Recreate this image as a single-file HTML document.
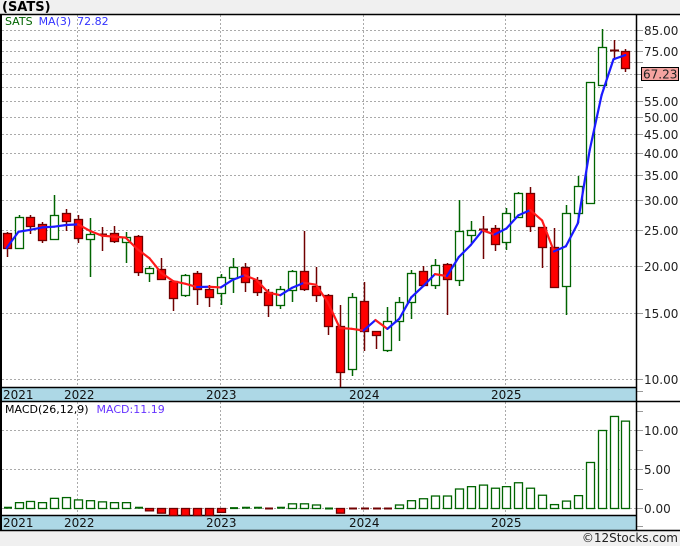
<!DOCTYPE html>
<html><head><meta charset="utf-8"><style>
html,body{margin:0;padding:0;background:#f0f0f0;}
svg{display:block;font-family:"DejaVu Sans","Liberation Sans",sans-serif;}
</style></head><body>
<svg id="s" width="680" height="546" xmlns="http://www.w3.org/2000/svg">
<rect x="0" y="0" width="680" height="546" fill="#f0f0f0"/>
<rect x="0" y="14" width="680" height="517" fill="#fff"/>
<text x="2" y="11" font-size="13" font-weight="bold" fill="#000">(SATS)</text>
<g id="grid"></g>
<rect x="0" y="387" width="637" height="14" fill="#add8e6"/>
<rect x="0" y="515" width="637" height="15" fill="#add8e6"/>
<g stroke="#000" stroke-width="1.5">
<line x1="0" y1="14.5" x2="680" y2="14.5"/>
<line x1="0" y1="387.5" x2="637" y2="387.5"/>
<line x1="0" y1="401.5" x2="680" y2="401.5"/>
<line x1="0" y1="515.5" x2="637" y2="515.5"/>
<line x1="0" y1="530.5" x2="680" y2="530.5"/>
<line x1="636.5" y1="14" x2="636.5" y2="531"/>
</g>
<rect x="0" y="14" width="2" height="517" fill="#000"/>
<g font-size="12" fill="#111">
<text x="3" y="399">2021</text><text x="64" y="399">2022</text><text x="206" y="399">2023</text><text x="349" y="399">2024</text><text x="491" y="399">2025</text>
<text x="3" y="527">2021</text><text x="64" y="527">2022</text><text x="206" y="527">2023</text><text x="349" y="527">2024</text><text x="491" y="527">2025</text>
</g>
<g id="c"></g>
<text x="5" y="25" font-size="11"><tspan fill="#006400">SATS</tspan><tspan fill="#3333ff" dx="6">MA(3)</tspan><tspan fill="#3333ff" dx="6">72.82</tspan></text>
<text x="5" y="413" font-size="11"><tspan fill="#000">MACD(26,12,9)</tspan><tspan fill="#6633ff" dx="8">MACD:11.19</tspan></text>
<rect x="641.5" y="67.5" width="37" height="13" fill="#f4a3a0" stroke="#000"/>
<text x="643" y="78.5" font-size="12" fill="#222">67.23</text>
<text x="678" y="542" font-size="12" fill="#222" text-anchor="end">©12Stocks.com</text>
</svg>
<script>
var NS="http://www.w3.org/2000/svg",g=document.getElementById('grid'),c=document.getElementById('c');
function el(p,t,a){var e=document.createElementNS(NS,t);for(var k in a)e.setAttribute(k,a[k]);p.appendChild(e);return e;}
function py(p){return 379-163*Math.log(p/10);}
var labeled={85:1,75:1,55:1,50:1,45:1,40:1,35:1,30:1,25:1,20:1,15:1,10:1};
for(var p=10;p<=85;p+=5){var y=Math.round(py(p))+.5;
el(g,'line',{x1:2,y1:y,x2:636,y2:y,stroke:'#aaa','stroke-dasharray':'2,2'});
el(g,'line',{x1:637,y1:y,x2:643,y2:y,stroke:'#999'});
if(labeled[p]){var t=el(g,'text',{x:644,y:y+4.5,'font-size':12,fill:'#222'});t.textContent=p.toFixed(2);}}
[[10,430],[5,469],[0,508]].forEach(function(a){var y=a[1]+.5;
el(g,'line',{x1:2,y1:y,x2:636,y2:y,stroke:'#aaa','stroke-dasharray':'2,2'});
el(g,'line',{x1:637,y1:y,x2:643,y2:y,stroke:'#999'});
var t=el(g,'text',{x:644,y:y+4.5,'font-size':12,fill:'#222'});t.textContent=a[0].toFixed(2);});
[391,411,450,489,526].forEach(function(y){el(g,'line',{x1:637,y1:y+.5,x2:643,y2:y+.5,stroke:'#999'});});
[77,220,363,505].forEach(function(x){
el(g,'line',{x1:x+.5,y1:15,x2:x+.5,y2:387,stroke:'#aaa','stroke-dasharray':'2,2'});
el(g,'line',{x1:x+.5,y1:402,x2:x+.5,y2:515,stroke:'#aaa','stroke-dasharray':'2,2'});
el(g,'line',{x1:x+.5,y1:515,x2:x+.5,y2:520,stroke:'#888'});});
// [up, bodyTop, bodyBot, wickTop, wickBot]
var D=[[0,233,248,232,257],[1,217,248,215,248],[0,217,226,215,234],[0,224,240,222,243],[1,215,239,195,239],
[0,213,221,209,231],[0,219,238,215,243],[1,234,239,218,277],[2,234,235,227,251],[0,233,241,226,243],
[1,237,242,232,263],[0,236,272,235,276],[1,268,273,266,282],[0,269,279,258,279],[0,281,298,281,311],
[1,275,295,274,297],[0,273,289,271,305],[0,289,297,285,307],[1,277,293,274,305],[1,267,278,258,293],
[0,267,282,263,292],[0,280,292,277,296],[0,292,305,289,317],[1,289,305,286,309],[1,271,290,270,302],
[0,271,289,231,291],[0,286,295,267,302],[0,295,326,294,335],[0,326,372,305,387],[1,297,369,293,376],
[0,301,331,282,351],[0,331,335,331,349],[1,321,350,307,352],[1,302,321,297,341],[1,273,302,270,319],
[0,271,285,266,287],[1,265,285,259,289],[0,264,279,263,315],[1,231,280,200,286],[1,230,235,221,243],
[2,229,230,216,259],[0,228,244,225,251],[1,213,242,208,250],[1,193,217,192,217],[0,193,226,187,232],
[0,227,247,227,268],[0,247,287,228,288],[1,213,286,205,315],[1,186,213,176,223],[1,82,203,82,203],
[1,47,85,29,85],[2,50,51,40,60],[0,51,68,49,72]];
var M=[0.1,0.75,0.9,0.75,1.3,1.4,1.1,1.0,0.85,0.75,0.75,0.1,-0.3,-0.6,-0.9,-0.9,-0.9,-0.9,-0.5,0.05,0.1,0.1,-0.1,0.1,0.6,0.6,0.45,0,-0.6,-0.15,-0.15,-0.15,-0.05,0.45,1.0,1.25,1.6,1.6,2.5,2.8,3.0,2.6,2.8,3.3,2.6,1.7,0.5,0.95,1.65,5.9,10.0,11.8,11.2];
var cl=[];
D.forEach(function(d,i){var x=Math.round(6.6+11.9*i);
var col=d[0]==1?'#006400':'#700000';
el(c,'line',{x1:x+.5,y1:d[3],x2:x+.5,y2:d[4],stroke:col,'stroke-width':1.5});
if(d[0]==2){el(c,'line',{x1:x-4,y1:d[1]+.5,x2:x+5,y2:d[1]+.5,stroke:col,'stroke-width':2});}
else el(c,'rect',{x:x-3.5,y:d[1]+.5,width:8,height:Math.max(1,d[2]-d[1]),fill:d[0]==1?'#fff':'#f00',stroke:col,'stroke-width':1.3});
cl.push(d[0]==1?d[1]:d[2]);
var v=M[i],zy=508,h=v*7.8;
if(Math.abs(h)<2){el(c,'line',{x1:x-3,y1:zy-Math.max(0,h)+.5,x2:x+5,y2:zy-Math.max(0,h)+.5,stroke:v>=0?'#006400':'#700000','stroke-width':2});}
else if(v>0)el(c,'rect',{x:x-3.5,y:zy-h+.5,width:8,height:h,fill:'#fff',stroke:'#006400','stroke-width':1.3});
else el(c,'rect',{x:x-3.5,y:zy+.5,width:8,height:-h,fill:'#f00',stroke:'#700000','stroke-width':1.3});
});
var ma=[];
for(var i=0;i<cl.length;i++){var s=0,n=0;for(var j=Math.max(0,i-2);j<=i;j++){s+=10*Math.exp((379-cl[j])/163);n++;}ma.push(py(s/n));}
for(var i=1;i<ma.length;i++){var x0=6.6+11.9*(i-1),x1=6.6+11.9*i;
el(c,'line',{x1:x0,y1:ma[i-1],x2:x1,y2:ma[i],stroke:ma[i]<=ma[i-1]?'#1a1aff':'#ff1a1a','stroke-width':2.2,'stroke-linecap':'round'});}
</script>
</body></html>
